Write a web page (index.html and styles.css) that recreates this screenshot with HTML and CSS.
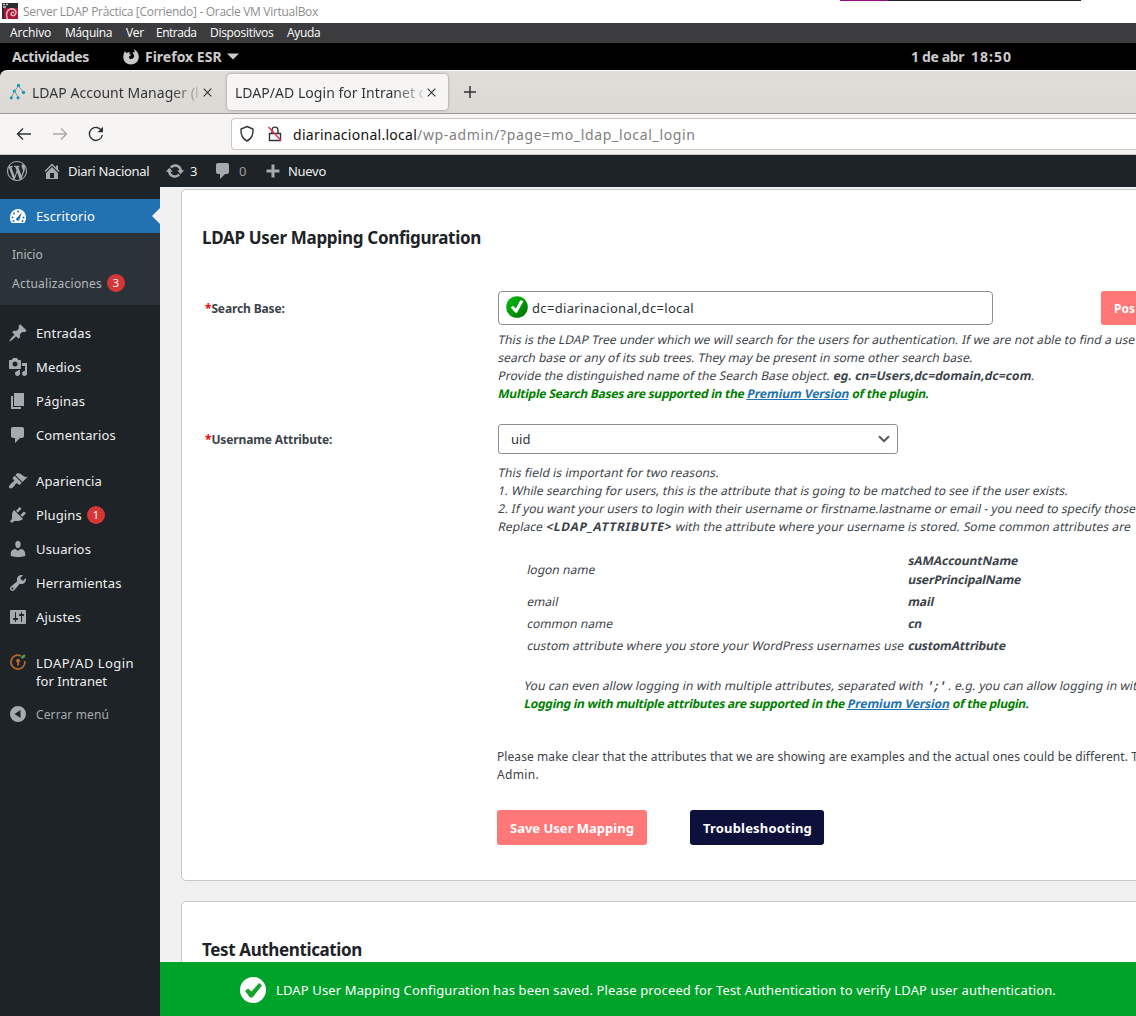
FILE: index.html
```
<!DOCTYPE html>
<html lang="es">
<head>
<meta charset="utf-8">
<title>Server LDAP Pràctica</title>
<link rel="stylesheet" href="styles.css">
</head>
<body>
<header class="vm-title">
  <span class="screen-edge"></span>
  <svg width="16" height="16" viewBox="0 0 16 16"><rect width="16" height="16" fill="#2b2b30"/><path d="M2 5h14v11H2z" fill="#a61638"/><path d="M5.500 16C2.500 8 8 4 13 7c3 4-2 7.500-4 4.500 0-2 2-3 3-1.500" fill="none" stroke="#f3b0b8" stroke-width="1.500"/><path d="M1 1.500h2m1 0h2M1 4h3" stroke="#ccc" stroke-width="1.300"/></svg>
  <span class="vm-name">Server LDAP Pràctica [Corriendo] - Oracle VM VirtualBox</span>
</header>
<nav class="vm-menu"><span class="m1">Archivo</span><span class="m2">Máquina</span><span class="m3">Ver</span><span class="m4">Entrada</span><span class="m5">Dispositivos</span><span>Ayuda</span></nav>
<div class="gnome-bar">
  <span class="activities">Actividades</span>
  <svg width="16" height="16" viewBox="0 0 16 16"><path d="M1.800 2.200 3.600 4C5 3 6 3 7 3.500L6.300 5.500h2L7 7c-2 .5-1 3 1.200 3 2.500 0 3.800-3.200 2-5.200L9.500 3l2 .6C12 2 11 1 10.500.3 14 1.500 16 5 15.800 8.500 15 17.500 1 18 .3 8.500.2 6 1 4 1.800 2.200z" fill="#c8c8c8"/></svg>
  <span class="app">Firefox ESR</span>
  <svg class="caret" width="12" height="7" viewBox="0 0 12 7"><path d="M0 .5h12l-6 6z" fill="#ccc"/></svg>
  <span class="date">1 de abr</span><span class="clock">18:50</span>
</div>
<div class="tabs-back">
<div class="tabs">
  <div class="tab first">
    <svg width="18" height="18" viewBox="0 0 18 18"><g stroke="#7a9aa5" stroke-width="1" fill="none"><path d="M9.500 3 5.500 8 2.500 14M9.500 3l5 6.500M5.500 8 9 14"/></g><g fill="#1f9ab8"><circle cx="9.500" cy="2.500" r="1.700"/><circle cx="5.300" cy="8" r="1.600"/><circle cx="14.500" cy="9.500" r="1.700"/><circle cx="2.300" cy="14.800" r="1.600"/><circle cx="9" cy="14.800" r="1.600"/></g></svg>
    <span class="tab-text t1">LDAP Account Manager (l</span>
    <svg class="x" width="9" height="9" viewBox="0 0 9 9"><path d="m.7.700 7.600 7.600m0-7.600L.7 8.300"/></svg>
  </div>
  <div class="tab active">
    <span class="tab-text t2">LDAP/AD Login for Intranet c</span>
    <svg class="x" width="9" height="9" viewBox="0 0 9 9"><path d="m.7.700 7.600 7.600m0-7.600L.7 8.300"/></svg>
  </div>
  <svg class="new" width="12" height="12" viewBox="0 0 12 12"><path d="M6 0v12M0 6h12"/></svg>
</div>
</div>
<div class="toolbar">
  <svg class="nav" width="16" height="14" viewBox="0 0 16 14"><path d="M15 7H1.500m5.500-5.500L1.500 7 7 12.500"/></svg>
  <svg class="nav off" width="16" height="14" viewBox="0 0 16 14"><path d="M1 7h13.500M9 1.500 14.500 7 9 12.500"/></svg>
  <svg class="nav reload" width="16" height="16" viewBox="0 0 16 16"><path d="M13.700 5A6.500 6.500 0 1 0 14.300 9"/><path class="solid" d="M15 .8v5.500H9.500z"/></svg>
  <div class="url">
    <svg class="nav" width="16" height="18" viewBox="0 0 16 18"><path d="M8 1.500 14 4c.4 5-1 9.500-6 12C3 13.500 1.600 9 2 4z"/></svg>
    <svg class="nav lock" width="16" height="18" viewBox="0 0 16 18"><path d="M2.500 8.500h11v7h-11zM5 8V5.500C5 1 11 1 11 5.500V8"/><path class="slash" d="m1.500 2 12.500 13.500"/></svg>
    <span class="host">diarinacional.local</span><span class="path">/wp-admin/?page=mo_ldap_local_login</span>
  </div>
</div>
<div class="adminbar">
  <svg class="wp" width="20" height="20" viewBox="0 0 20 20"><path d="M20 10c0-5.510-4.490-10-10-10C4.480 0 0 4.490 0 10c0 5.520 4.480 10 10 10 5.510 0 10-4.480 10-10zM7.780 15.370L4.370 6.220c.55-.02 1.170-.08 1.170-.08.5-.06.440-1.130-.06-1.110 0 0-1.450.110-2.370.110-.18 0-.37 0-.58-.01C4.120 2.690 6.870 1.110 10 1.110c2.330 0 4.450.87 6.050 2.340-.68-.110-1.650.390-1.650 1.580 0 .740.450 1.360.9 2.100.350.610.550 1.360.550 2.460 0 1.490-1.400 5-1.400 5l-3.030-8.370c.540-.02.820-.170.820-.170.5-.05.440-1.250-.06-1.220 0 0-1.440.120-2.380.120-.87 0-2.330-.120-2.330-.120-.5-.03-.56 1.200-.06 1.220l.92.08 1.260 3.410zM17.410 10c.240-.640.740-1.870.430-4.250.7 1.290 1.050 2.710 1.050 4.250 0 3.290-1.730 6.240-4.400 7.780.970-2.590 1.940-5.200 2.920-7.780zM6.100 18.090C3.120 16.650 1.110 13.530 1.110 10c0-1.300.230-2.480.720-3.590C3.250 10.300 4.670 14.200 6.100 18.090zm4.030-6.630l2.580 6.980c-.86.290-1.760.450-2.710.450-.79 0-1.570-.110-2.290-.330.810-2.380 1.620-4.740 2.420-7.100z"/></svg>
  <svg class="home" width="20" height="20" viewBox="0 0 20 20"><path d="M16 8.500l1.530 1.530-1.060 1.060L10 4.600l-6.470 6.490-1.060-1.060L10 2.500l4 4v-2h2v4zm-6-2.460l6 5.990V18H4v-5.970zM12 17v-5H8v5h4z"/></svg>
  <span class="site">Diari Nacional</span>
  <svg class="upd" width="20" height="20" viewBox="0 0 20 20"><path d="M10.200 3.280c3.530 0 6.430 2.610 6.920 6h2.080l-3.500 4-3.500-4h2.320c-.45-1.970-2.210-3.450-4.320-3.450-1.450 0-2.730.710-3.540 1.780L4.950 5.660C6.230 4.200 8.110 3.280 10.200 3.280zm-.4 13.440c-3.520 0-6.430-2.610-6.920-6H.8l3.500-4c1.170 1.330 2.330 2.670 3.500 4H5.480c.45 1.970 2.210 3.450 4.320 3.450 1.450 0 2.730-.710 3.540-1.780l1.710 1.950c-1.280 1.460-3.150 2.380-5.250 2.380z"/></svg>
  <span class="upd-n">3</span>
  <svg class="com" width="20" height="20" viewBox="0 0 20 20"><path d="M5 2h9c1.100 0 2 .9 2 2v7c0 1.100-.9 2-2 2h-2l-5 5v-5H5c-1.100 0-2-.9-2-2V4c0-1.100.9-2 2-2z"/></svg>
  <span class="com-n">0</span>
  <svg class="plus" width="14" height="14" viewBox="0 0 14 14"><path d="M5.500.5h3v5h5v3h-5v5h-3v-5h-5v-3h5z"/></svg>
  <span class="nuevo">Nuevo</span>
</div>
<div class="wp-body">
  <aside class="side">
    <div class="item current"><svg viewBox="0 0 20 20"><path fill-rule="evenodd" d="M3.760 17h12.480c1.340-1.630 1.760-3.430 1.760-5.500C18 6.810 14.420 3 10 3s-8 3.810-8 8.500c0 2.070.42 3.870 1.760 5.500z"/><g fill="#2271b1"><circle cx="10" cy="5.500" r="1"/><circle cx="6" cy="7.500" r="1"/><circle cx="4.500" cy="11.500" r="1"/><circle cx="15.500" cy="11.500" r="1"/><circle cx="14.500" cy="15" r="1"/><circle cx="5.500" cy="15" r="1"/><path d="M13.800 6.500 11.700 13A1.800 1.800 0 1 1 9.500 11.200z"/></g></svg>Escritorio</div>
    <div class="sub"><span class="s1">Inicio</span><span class="s2">Actualizaciones <b class="bubble">3</b></span></div>
    <div class="group">
      <div class="item"><svg viewBox="0 0 20 20"><path d="M10.440 3.020l1.820-1.820 6.360 6.350-1.830 1.820c-1.050-.68-2.480-.57-3.410.360l-.75.750c-.92.930-1.040 2.350-.350 3.410l-1.830 1.820-2.410-2.410-2.800 2.790c-.42.420-3.380 2.710-3.800 2.290s1.860-3.390 2.280-3.810l2.790-2.790L4.100 9.360l1.830-1.820c1.050.690 2.480.570 3.400-.360l.75-.75c.930-.92 1.050-2.350.360-3.410z"/></svg>Entradas</div>
      <div class="item"><svg viewBox="0 0 20 20"><path d="M13 11V4c0-.55-.45-1-1-1h-1.670L9 1H5L3.670 3H2c-.55 0-1 .45-1 1v7c0 .55.45 1 1 1h10c.55 0 1-.45 1-1zM7 4.500c1.380 0 2.500 1.120 2.500 2.500S8.380 9.500 7 9.500 4.500 8.380 4.500 7 5.620 4.500 7 4.500zM14 6h5v10.500c0 1.380-1.120 2.500-2.500 2.500S14 17.880 14 16.500s1.120-2.500 2.500-2.500c.17 0 .34.02.5.05V9h-3V6zm-4 8.050V13h2v3.500c0 1.380-1.120 2.500-2.500 2.500S7 17.880 7 16.500 8.120 14 9.500 14c.17 0 .34.02.5.05z"/></svg>Medios</div>
      <div class="item"><svg viewBox="0 0 20 20"><path d="M6 15V2h10v13H6zm-1 1h8v2H3V5h2v11z"/></svg>Páginas</div>
      <div class="item"><svg viewBox="0 0 20 20"><path d="M5 2h9c1.100 0 2 .9 2 2v7c0 1.100-.9 2-2 2h-2l-5 5v-5H5c-1.100 0-2-.9-2-2V4c0-1.100.9-2 2-2z"/></svg>Comentarios</div>
    </div>
    <div class="group">
      <div class="item"><svg viewBox="0 0 20 20"><path d="M14.480 11.060L7.410 3.990l1.500-1.500c.5-.56 2.300-.47 3.510.320 1.210.8 1.430 1.280 2.910 2.100 1.180.640 2.450 1.260 4.450.850zm-.71.710L6.700 4.700 4.930 6.470c-.39.390-.39 1.020 0 1.410l1.060 1.060c.390.390.390 1.030 0 1.420-.6.600-1.430 1.110-2.210 1.690-.350.260-.7.530-1.010.840C1.430 14.230.4 16.080 1.400 17.070c.990 1 2.840-.03 4.180-1.360.310-.310.580-.66.850-1.020.570-.78 1.080-1.610 1.690-2.210.390-.39 1.020-.39 1.410 0l1.060 1.060c.390.390 1.020.390 1.410 0z"/></svg>Apariencia</div>
      <div class="item"><svg viewBox="0 0 20 20"><path d="M13.110 4.360L9.870 7.600 8 5.730l3.240-3.240c.350-.340 1.050-.2 1.560.320.520.510.660 1.210.310 1.550zm-8 1.770l.91-1.120 9.010 9.010-1.190.840c-.71.710-2.630 1.160-3.820 1.160H6.140L4.900 17.260c-.59.590-1.540.590-2.120 0-.59-.58-.59-1.530 0-2.120l1.240-1.240v-3.880c0-1.130.4-3.190 1.090-3.890zm7.260 3.970l3.240-3.240c.340-.350 1.040-.210 1.550.310.520.510.660 1.210.310 1.550l-3.240 3.250z"/></svg>Plugins <b class="bubble">1</b></div>
      <div class="item"><svg viewBox="0 0 20 20"><path d="M10 9.250c-2.270 0-2.730-3.440-2.730-3.440C7 4.020 7.820 2 9.970 2c2.160 0 2.980 2.020 2.710 3.810 0 0-.41 3.440-2.680 3.440zm0 2.570L12.720 10c2.390 0 4.520 2.330 4.520 4.530v2.490s-3.650 1.130-7.240 1.130c-3.650 0-7.240-1.130-7.240-1.130v-2.490c0-2.250 1.940-4.480 4.470-4.480z"/></svg>Usuarios</div>
      <div class="item"><svg viewBox="0 0 20 20"><path d="M16.680 9.770c-1.340 1.340-3.300 1.670-4.950.990l-5.410 6.520c-.99.990-2.590.990-3.580 0s-.99-2.590 0-3.570l6.520-5.420c-.68-1.650-.35-3.610.990-4.950 1.280-1.280 3.120-1.620 4.720-1.060l-2.890 2.890 2.820 2.820 2.860-2.870c.530 1.580.180 3.390-1.080 4.650zM3.810 16.210c.4.390 1.040.390 1.430 0 .4-.4.4-1.040 0-1.430-.39-.4-1.030-.4-1.430 0-.39.390-.39 1.030 0 1.430z"/></svg>Herramientas</div>
      <div class="item"><svg viewBox="0 0 20 20"><path d="M18 16V4c0-.55-.45-1-1-1H3c-.55 0-1 .45-1 1v12c0 .55.45 1 1 1h14c.55 0 1-.45 1-1zM8 11h1c.55 0 1 .45 1 1s-.45 1-1 1H8v1.500c0 .28-.22.5-.5.5s-.5-.22-.5-.5V13H6c-.55 0-1-.45-1-1s.45-1 1-1h1V5.500c0-.28.22-.5.5-.5s.5.22.5.5V11zm5-2h-1c-.55 0-1-.45-1-1s.45-1 1-1h1V5.500c0-.28.22-.5.5-.5s.5.22.5.5V7h1c.55 0 1 .45 1 1s-.45 1-1 1h-1v5.500c0 .28-.22.5-.5.5s-.5-.22-.5-.5V9z"/></svg>Ajustes</div>
    </div>
    <div class="group">
      <div class="item tall"><svg viewBox="0 0 20 20"><path d="M13 3.900A7 7 0 1 0 16.800 9" fill="none" stroke="#b8692e" stroke-width="1.700"/><path d="M9.200 13.500v-3a1.900 1.900 0 1 1 1.800 0v3z" fill="#b8692e"/><path d="M13 6.500c0-3 2-4 4.500-4 0 3-2 4.500-4.500 4z" fill="#5d9b5c"/></svg><span><span class="l1">LDAP/AD Login</span><br><span class="l2">for Intranet</span></span></div>
      <div class="item close"><svg viewBox="0 0 20 20"><path fill-rule="evenodd" d="M10 2a8 8 0 1 1 0 16 8 8 0 0 1 0-16zm2.500 4L6.500 10l6 4z"/></svg>Cerrar menú</div>
    </div>
  </aside>
  <main class="content">
    <section class="card mapping">
      <h2 class="map-h">LDAP User Mapping Configuration</h2>
      <div class="row search">
        <div class="label lb1"><i>*</i>Search Base:</div>
        <div class="field">
          <div class="line-field">
            <div class="input"><svg width="22" height="22" viewBox="0 0 22 22"><defs><linearGradient id="ok" x2="1" y2="1"><stop stop-color="#04bf10"/><stop offset=".5" stop-color="#039a08"/><stop offset="1" stop-color="#046d05"/></linearGradient></defs><circle cx="11" cy="11" r="10.800" fill="url(#ok)"/><path d="m4.800 11.500 2.300-1.700 2.700 2.700 4.500-8.300 3.200.7-6.500 11.800H9.400z" fill="#fff"/></svg>dc=diarinacional,dc=local</div>
            <div class="btn possible">Pos</div>
          </div>
          <div class="help">
            <p class="h1">This is the LDAP Tree under which we will search for the users for authentication. If we are not able to find a use</p>
            <p class="h2">search base or any of its sub trees. They may be present in some other search base.</p>
            <p class="h3">Provide the distinguished name of the Search Base object. <b class="eg1">eg. cn=Users,dc=domain,dc=com</b>.</p>
            <p class="green">Multiple Search Bases are supported in the <a>Premium Version</a> of the plugin.</p>
          </div>
        </div>
      </div>
      <div class="row">
        <div class="label lb2"><i>*</i>Username Attribute:</div>
        <div class="field">
          <div class="select">uid<svg width="12" height="8" viewBox="0 0 12 8"><path d="m1 1.200 5 5 5-5" fill="none" stroke="#50575e" stroke-width="2"/></svg></div>
          <div class="help reasons">
            <p class="h4">This field is important for two reasons.</p>
            <p class="h5">1. While searching for users, this is the attribute that is going to be matched to see if the user exists.</p>
            <p class="h6">2. If you want your users to login with their username or firstname.lastname or email - you need to specify those</p>
            <p class="h7">Replace <b class="attr">&lt;LDAP_ATTRIBUTE&gt;</b> with the attribute where your username is stored. Some common attributes are</p>
          </div>
          <div class="attrs">
            <span>logon name</span><div><b>sAMAccountName</b><b class="upn">userPrincipalName</b></div>
            <span>email</span><b class="mail">mail</b>
            <span>common name</span><b>cn</b>
            <span class="custom">custom attribute where you store your WordPress usernames use</span><b class="ca">customAttribute</b>
          </div>
          <div class="help multi">
            <p class="h8">You can even allow logging in with multiple attributes, separated with <b class="semi">';'</b><span class="eg"> . e.g. you can allow logging in wit</span></p>
            <p class="green g2">Logging in with multiple attributes are supported in the <a>Premium Version</a> of the plugin.</p>
          </div>
          <div class="note"><p>Please make clear that the attributes that we are showing are examples and the actual ones could be different. T</p><p class="adm">Admin.</p></div>
          <div class="actions"><div class="btn save">Save User Mapping</div><div class="btn trouble">Troubleshooting</div></div>
        </div>
      </div>
    </section>
    <section class="card test"><h2 class="test-h">Test Authentication</h2></section>
    <div class="toast"><svg width="26" height="26" viewBox="0 0 26 26"><circle cx="13" cy="13" r="13" fill="#fff"/><path d="m5 14 3-2.500 3.500 3 7.500-8.500 3 2.500-9.500 12h-2.500z" fill="#17a32a"/></svg><span>LDAP User Mapping Configuration has been saved. Please proceed for Test Authentication to verify LDAP user authentication.</span></div>
  </main>
</div>
</body>
</html>
```
FILE: styles.css
```
* { box-sizing: border-box; }
body { margin: 0; width: 1136px; height: 1016px; overflow: hidden; display: flex; flex-direction: column; font-family: "Noto Sans", sans-serif; font-size: 13px; color: #3c434a; background: #f0f0f1; white-space: nowrap; }
h2, p { margin: 0; }
svg { flex: none; }

/* VirtualBox window */
.vm-title { position: relative; height: 23px; flex: none; background: #fff; display: flex; align-items: center; gap: 5px; padding: 0 0 1px 2px; font: 12px "Open Sans", sans-serif; color: #8e8e8e; }
.vm-name { letter-spacing: -.305px; padding-top: 1px; }
.screen-edge { position: absolute; left: 840px; top: 0; width: 241px; height: 1px; background: linear-gradient(90deg, #990b8c 48px, #222 48px); }
.vm-menu { height: 20px; flex: none; background: #3c3c3e; color: #fff; display: flex; align-items: center; padding: 0 0 2px 10px; font: 12px "Open Sans", sans-serif; letter-spacing: -.3px; }
.vm-menu .m1 { width: 55px; letter-spacing: -.1px; }
.vm-menu .m2 { width: 61px; }
.vm-menu .m3 { width: 30px; }
.vm-menu .m4 { width: 54px; letter-spacing: -.5px; }
.vm-menu .m5 { width: 77px; }

/* GNOME top bar */
.gnome-bar { height: 27px; flex: none; background: #000; color: #ccc; display: flex; align-items: center; padding-left: 12px; font-size: 14px; font-weight: 700; }
.activities { width: 111px; letter-spacing: -.347px; }
.app { margin-left: 6px; width: 82px; }
.date { margin-left: 672px; width: 60px; letter-spacing: -.37px; }
.clock { letter-spacing: 1px; }

/* Firefox */
.tabs-back { background: #000; height: 44px; flex: none; }
.tabs { height: 44px; background: linear-gradient(#e1deda, #dcd8d4); border-top: 1px solid #fafafa; border-bottom: 1px solid #999995; border-radius: 7px 0 0 0; display: flex; align-items: center; color: #2e3436; font-size: 14px; }
.tab { display: flex; align-items: center; height: 36px; }
.first { width: 227px; padding-left: 9px; gap: 5px; }
.active { width: 221px; padding-left: 8px; background: #f6f5f4; border-radius: 4px; box-shadow: 0 0 3px #8a8783; }
.tab-text { color: transparent; background: linear-gradient(90deg, #2e3436 84%, rgba(46, 52, 54, .2)); background-clip: text; }
.t1 { width: 166px; letter-spacing: .023px; }
.t2 { width: 188px; letter-spacing: .033px; }
.x { fill: none; stroke: #2e3436; stroke-width: 1.1; }
.active .x { margin-left: 4px; }
.new { margin-left: 16px; fill: none; stroke: #2e3436; stroke-width: 1.5; }
.toolbar { height: 41px; flex: none; background: #f6f5f4; border-bottom: 1px solid #c9c6bd; display: flex; align-items: center; padding-left: 16px; }
.nav { fill: none; stroke: #2e3436; stroke-width: 1.4; margin-right: 20px; }
.off { stroke: #a9a9a8; }
.reload { margin-right: 127px; }
.solid { fill: #2e3436; stroke: none; }
.url { flex: 1; height: 32px; background: #fff; border: 1px solid #cdc7c2; border-right: 0; border-radius: 4px 0 0 4px; display: flex; align-items: center; padding-left: 7px; font-size: 14px; }
.url .nav { margin-right: 12px; }
.url .lock { margin-right: 10px; }
.url .slash { stroke: #f0284f; }
.host { color: #111; letter-spacing: .268px; }
.path { color: #808080; letter-spacing: .66px; }

/* WordPress admin bar */
.adminbar { height: 32px; flex: none; background: #1d2327; color: #f0f0f1; display: flex; align-items: center; padding-left: 7px; fill: #a7aaad; }
.home { margin-left: 15px; }
.site { margin-left: 6px; width: 97px; letter-spacing: -.3px; }
.upd-n { margin-left: 5px; width: 23px; }
.com-n { margin-left: 6px; width: 27px; color: #9a9da0; }
.nuevo { margin-left: 8px; letter-spacing: -.29px; }

/* Sidebar */
.wp-body { flex: 1; min-height: 0; display: flex; }
.side { width: 160px; flex: none; background: #1d2327; padding-top: 12px; color: #f0f0f1; }
.item { position: relative; height: 34px; display: flex; align-items: center; padding-left: 8px; letter-spacing: .14px; }
.item svg { width: 20px; height: 20px; margin-right: 8px; fill: #a7aaad; }
.current { background: #2271b1; color: #fff; }
.current svg { fill: #fff; }
.current::after { content: ""; position: absolute; right: 0; top: 9px; border: 8px solid transparent; border-left: 0; border-right-color: #f0f0f1; }
.sub { height: 72px; background: #2c3338; padding: 7px 0 0 12px; font-size: 12px; color: #b4b9bd; display: flex; flex-direction: column; }
.sub span { height: 29px; display: flex; align-items: center; }
.s2 { letter-spacing: .232px; }
.bubble { width: 18px; height: 18px; border-radius: 9px; background: #d63638; color: #fff; font-size: 11px; font-weight: 400; line-height: 17px; text-align: center; margin-left: 5px; letter-spacing: 0; }
.sub .bubble { margin-bottom: 1px; }
.group { padding-top: 11px; }
.group + .group { padding-top: 12px; }
.tall { height: 51px; align-items: flex-start; line-height: 18px; }
.tall svg { margin-top: 6px; }
.tall > span { padding-top: 8px; }
.l1 { letter-spacing: .44px; }
.l2 { letter-spacing: .03px; }
.close { font-size: 12px; color: #a7aaad; letter-spacing: .12px; }

/* Plugin page */
.content { flex: 1; min-width: 0; overflow: hidden; position: relative; padding: 2px 0 0 21px; }
.card { background: #fff; border: 1px solid #c8c8ca; border-radius: 5px; width: 1200px; padding-left: 20px; }
.mapping { height: 692px; padding-top: 36px; }
h2 { font-size: 17px; line-height: 24px; font-weight: 700; color: #1d2327; }
.map-h { letter-spacing: -.307px; margin-bottom: 41px; }
.test-h { letter-spacing: -.373px; }
.test { margin-top: 20px; height: 150px; padding-top: 36px; }
.row { display: flex; }
.search { margin-bottom: 21px; }
.label { width: 295px; padding-left: 3px; font-size: 12px; font-weight: 700; line-height: 36px; letter-spacing: -.13px; }
.lb2 { line-height: 32px; }
.label i { font-style: normal; color: #f00; }
.line-field { display: flex; }
.input { width: 495px; height: 34px; border: 1px solid #8c8f94; border-radius: 4px; margin: 0 108px 6px 0; display: flex; align-items: center; padding-left: 7px; letter-spacing: .329px; color: #2c3338; }
.input svg { margin: -2px 4px 0 0; }
.field { padding-left: 1px; }
.select { width: 400px; height: 30px; border: 1px solid #8c8f94; border-radius: 3px; display: flex; align-items: center; justify-content: space-between; padding: 0 7px 0 12px; color: #2c3338; }

/* Slanted help text */
.help { font-size: 12px; line-height: 18px; }
.help p, .attrs span, .attrs b { display: block; width: max-content; transform: skewX(-12deg); transform-origin: 0 60%; }
.help p span { display: inline; transform: none; }
.reasons { margin-top: 10px; }
.h1 { letter-spacing: .075px; }
.h2 { letter-spacing: .055px; }
.h3 { letter-spacing: .088px; }
.eg1 { letter-spacing: .117px; }
.h4 { letter-spacing: .108px; }
.h5 { letter-spacing: .07px; }
.h6 { letter-spacing: .035px; }
.h7 { letter-spacing: .1px; }
.h8 { letter-spacing: .11px; }
.attr { letter-spacing: .721px; }
.green { color: #008000; font-weight: 700; letter-spacing: -.23px; }
.g2 { letter-spacing: -.255px; }
.green a { color: #2271b1; text-decoration: underline; letter-spacing: -.043px; }
.attrs { display: grid; grid-template-columns: 381px auto; grid-template-rows: 41px 22px 22px 22px; align-items: center; margin: 13px 0 21px 29px; font-size: 12px; line-height: 19px; letter-spacing: .04px; }
.attrs b { letter-spacing: -.03px; }
.attrs .upn { letter-spacing: -.088px; }
.attrs .custom { letter-spacing: .119px; }
.attrs .ca { letter-spacing: -.16px; }
.multi { margin-left: 26px; }
.semi { font-family: "Liberation Mono", monospace; font-size: 12px; line-height: 1; letter-spacing: -1px; }
.eg { letter-spacing: .08px; }
.note { margin: 35px 0 26px -1px; font-size: 12px; line-height: 18px; letter-spacing: .077px; }
.adm { letter-spacing: .33px; }
.actions { display: flex; gap: 43px; margin-left: -1px; }
.btn { height: 35px; border-radius: 3px; background: #ff7777; color: #fff; font-weight: 700; line-height: 36px; padding-left: 13px; }
.possible { width: 190px; height: 34px; font-size: 12px; }
.save { width: 150px; }
.trouble { width: 134px; background: #0e103c; letter-spacing: .183px; }
.toast { position: absolute; left: 0; right: 0; bottom: 0; height: 54px; background: #00a32a; color: #fff; display: flex; align-items: center; padding: 2px 0 0 80px; gap: 10px; letter-spacing: .13px; }
```
